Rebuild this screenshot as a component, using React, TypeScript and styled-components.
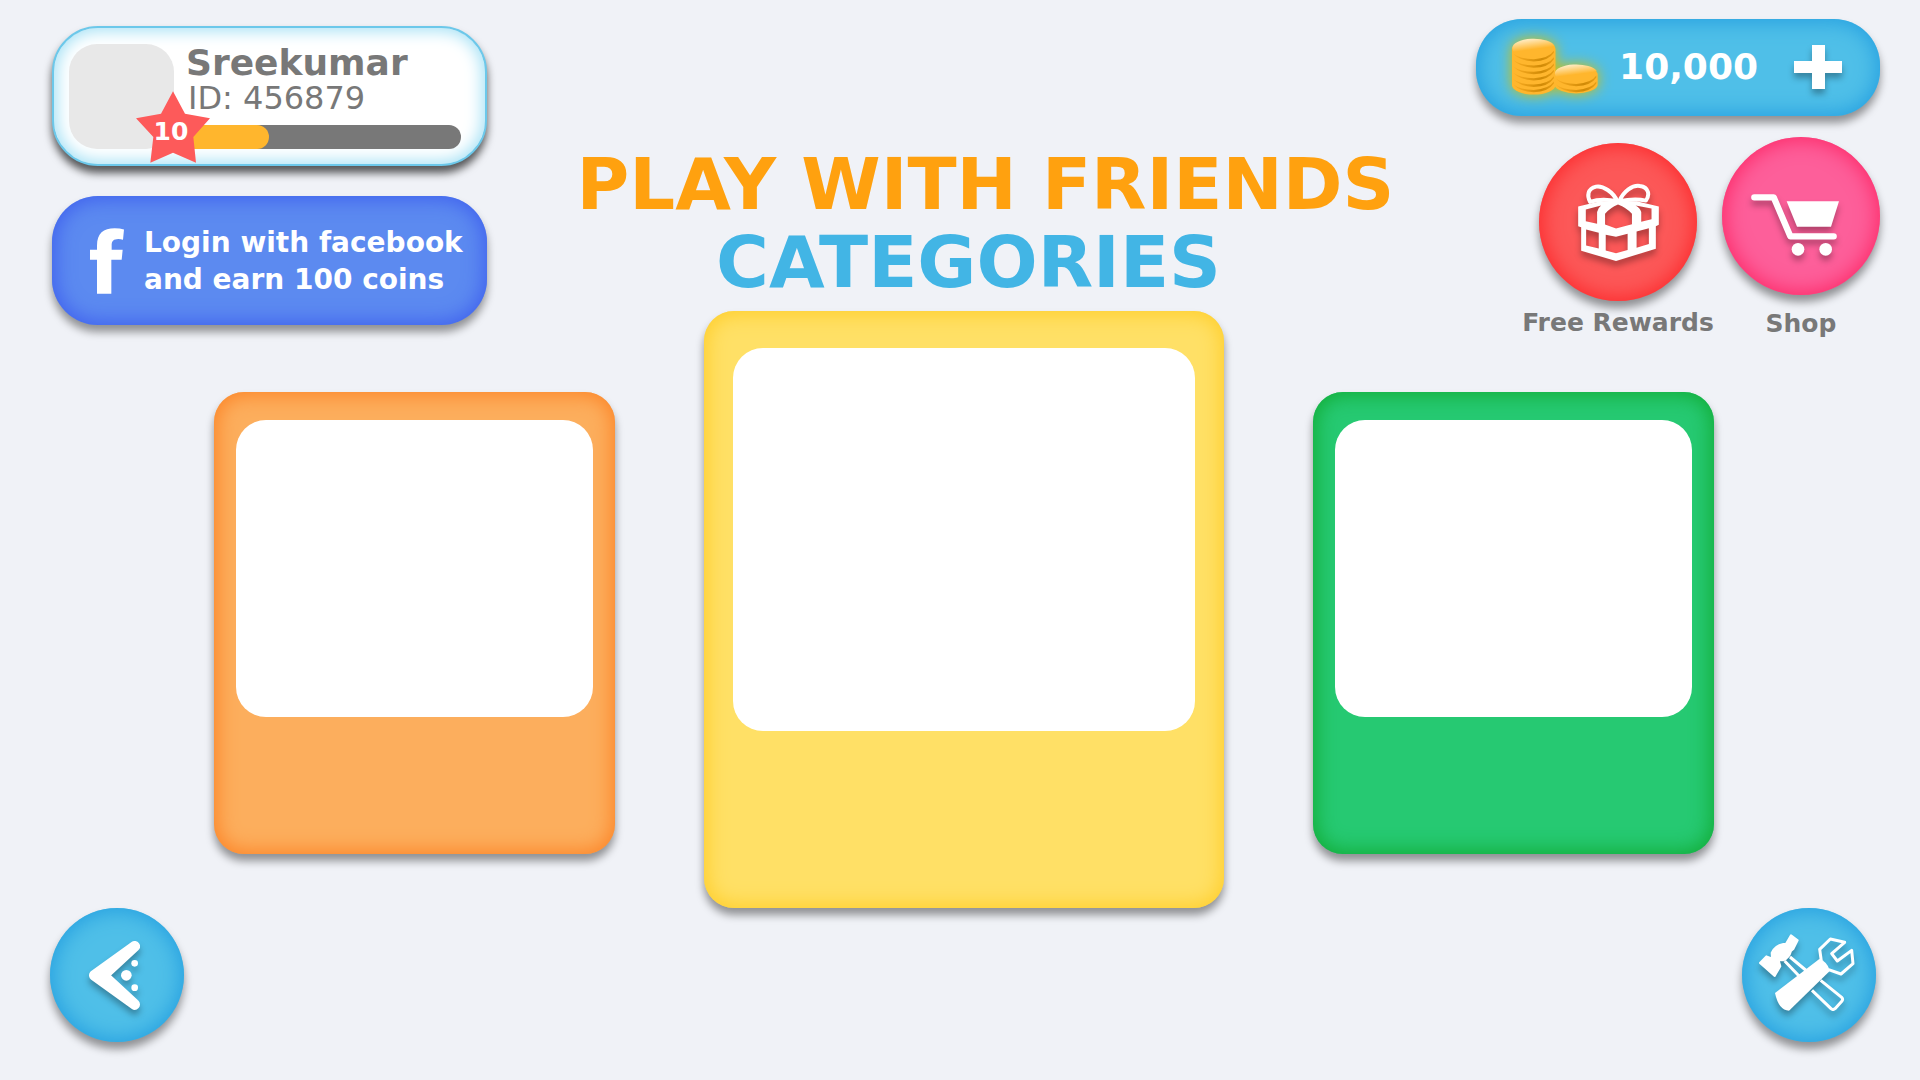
import React from "react";
import styled, { createGlobalStyle, css } from "styled-components";

const GlobalStyle = createGlobalStyle`
  *, *::before, *::after { box-sizing: border-box; }
  body {
    margin: 0;
    background: #f0f2f7;
    color: #787878;
    font-family: "DejaVu Sans", Verdana, sans-serif;
  }
  h1, p { margin: 0; }
  button {
    margin: 0;
    padding: 0;
    border: 0;
    background: none;
    color: inherit;
    font: inherit;
    cursor: pointer;
  }
  svg { display: block; flex: none; overflow: visible; }
`;

type Tone = { base: string; edge: string };

const tones: Record<string, Tone> = {
  sky: { base: "#4fbfe8", edge: "#26a0e0" },
  facebook: { base: "#5c8af0", edge: "#3f60ee" },
  red: { base: "#fc5858", edge: "#fc2a2c" },
  pink: { base: "#fd5f9a", edge: "#fd2a68" },
  orange: { base: "#fcae5d", edge: "#fc8427" },
  yellow: { base: "#ffe066", edge: "#ffce2b" },
  green: { base: "#26c972", edge: "#12ac36" },
};

const raised = css<{ $tone: Tone }>`
  background: ${(p) => p.$tone.base};
  box-shadow:
    inset 0 0 20px 3px ${(p) => p.$tone.edge},
    0 7px 9px rgba(0, 0, 0, 0.4);
`;

const iconShadow = css`
  filter: drop-shadow(0 5px 3px rgba(0, 0, 0, 0.3));
`;

const Page = styled.div`
  min-height: 100vh;
  display: flex;
  flex-direction: column;
  padding: 0 40px 38px 48px;
`;

const Header = styled.header`
  display: flex;
  justify-content: space-between;
  align-items: flex-start;
  height: 340px;
`;

const Account = styled.section`
  width: 435px;
  margin-left: 4px;
  padding-top: 26px;
  display: flex;
  flex-direction: column;
  gap: 30px;
`;

const Profile = styled.div`
  display: flex;
  height: 140px;
  padding: 16px 24px 15px 15px;
  border: 2px solid #6cc8ea;
  border-radius: 46px;
  background: #fff;
  box-shadow:
    inset 0 0 16px 3px #a5e1f5,
    0 7px 9px rgba(0, 0, 0, 0.65);
`;

const Avatar = styled.div`
  position: relative;
  flex: none;
  width: 105px;
  height: 105px;
  border-radius: 28px;
  background: #e8e8e8;
`;

const Level = styled.div`
  position: absolute;
  left: 67px;
  top: 47px;
  width: 74px;
  height: 72px;
  display: grid;
  place-items: center;
  color: #fff;
  font-size: 25px;
  line-height: 32px;
  font-weight: 700;

  > * { grid-area: 1 / 1; }
  > span { padding-top: 10px; padding-right: 4px; }
`;

const Info = styled.div`
  flex: 1;
  display: flex;
  flex-direction: column;
`;

const Name = styled.p`
  padding-left: 12px;
  font-size: 36px;
  line-height: 38px;
  font-weight: 700;
`;

const PlayerId = styled.p`
  flex: 1;
  padding-left: 14px;
  font-size: 32px;
  line-height: 32px;
`;

const Track = styled.div`
  height: 24px;
  border-radius: 0 12px 12px 0;
  background: #787878;
`;

const Fill = styled.div`
  width: 33%;
  height: 100%;
  border-radius: 0 12px 12px 0;
  background: #ffb62d;
`;

const FacebookLogin = styled.button<{ $tone: Tone }>`
  ${raised}
  display: flex;
  align-items: center;
  gap: 20px;
  height: 129px;
  padding-left: 38px;
  border-radius: 46px;
  color: #fff;
  font-size: 28px;
  line-height: 37px;
  font-weight: 700;
  text-align: left;
  white-space: nowrap;
`;

const Titles = styled.h1`
  padding-top: 145px;
  padding-left: 8px;
  font-size: 72px;
  line-height: 78px;
  font-weight: 700;
  text-align: center;
  white-space: nowrap;
  color: #ffa10f;
`;

const Subtitle = styled.span`
  display: block;
  padding-right: 34px;
  color: #42b5e5;
`;

const Wallet = styled.section`
  width: 404px;
  padding-top: 19px;
`;

const Balance = styled.div<{ $tone: Tone }>`
  ${raised}
  display: flex;
  align-items: center;
  justify-content: space-between;
  height: 97px;
  padding: 0 38px 2px 36px;
  border-radius: 46px;
  color: #fff;
  font-size: 36px;
  line-height: 48px;
  font-weight: 700;
`;

const Amount = styled.span`
  flex: 1;
  padding-right: 36px;
  text-align: right;
`;

const Coins = styled.svg`
  filter: drop-shadow(0 0 7px #d8c000);
`;

const IconButton = styled.button`
  > svg { ${iconShadow} }
`;

const Shortcuts = styled.div`
  display: flex;
  align-items: flex-start;
  justify-content: flex-end;
  padding-top: 21px;
`;

const Shortcut = styled.button<{ $lowered?: boolean; $width: number }>`
  width: ${(p) => p.$width}px;
  padding-top: ${(p) => (p.$lowered ? 6 : 0)}px;
  display: flex;
  flex-direction: column;
  align-items: center;
  gap: ${(p) => (p.$lowered ? 6 : 13)}px;
  font-size: 25px;
  line-height: 32px;
  font-weight: 700;
  white-space: nowrap;
`;

const Disc = styled.span<{ $tone: Tone; $size: number }>`
  ${raised}
  display: grid;
  place-items: center;
  width: ${(p) => p.$size}px;
  height: ${(p) => p.$size}px;
  border-radius: 50%;
  > svg { ${iconShadow} }
`;

const Categories = styled.main`
  display: flex;
  justify-content: center;
  align-items: flex-start;
  gap: 89px;
  margin-top: -29px;
`;

const Card = styled.button<{ $tone: Tone; $featured?: boolean }>`
  ${raised}
  display: flex;
  align-items: flex-start;
  width: ${(p) => (p.$featured ? 520 : 401)}px;
  height: ${(p) => (p.$featured ? 597 : 462)}px;
  margin-top: ${(p) => (p.$featured ? 0 : 81)}px;
  padding: ${(p) => (p.$featured ? "37px 29px" : "28px 22px")};
  border-radius: 30px;
`;

const Picture = styled.span<{ $featured?: boolean }>`
  flex: 1;
  height: ${(p) => (p.$featured ? 383 : 297)}px;
  border-radius: 30px;
  background: #fff;
`;

const Footer = styled.footer`
  display: flex;
  justify-content: space-between;
  margin-top: auto;
  padding: 0 4px 0 2px;
`;

const StarShape = () => (
  <svg width="74" height="72" viewBox="286 243 222 214" aria-hidden="true">
    <path fill="#fd5a5a" d="M397 243 433 310 508 324 458 380 466 457 397 427 329 457 338 380 286 324 361 310Z" />
  </svg>
);

const FacebookMark = () => (
  <svg width="34" height="66" viewBox="150 651 102 197" aria-hidden="true">
    <path
      fill="#fff"
      d="M171 848V746H150V716H171V703C171 666 190 651 224 651Q240 651 252 655L249 686Q240 683 230 684C218 685 215 692 215 703V716H248L245 746H214V848Z"
    />
  </svg>
);

const CoinStacks = () => {
  const bands = (cx: number, ys: number[]) =>
    ys.map((y) => (
      <path
        key={`${cx}-${y}`}
        d={`M${cx - 62} ${y + 10}Q${cx - 40} ${y + 27} ${cx} ${y + 27}Q${cx + 46} ${y + 24} ${cx + 60} ${y + 2}V${y + 8}Q${cx + 44} ${y + 33} ${cx} ${y + 34}Q${cx - 42} ${y + 32} ${cx - 62} ${y + 10}Z`}
        fill="url(#coinBand)"
      />
    ));
  return (
    <Coins width="86" height="56" viewBox="158 86 257 167" aria-hidden="true">
      <defs>
        <linearGradient id="coinBand" x1="0" x2="1">
          <stop offset="0" stopColor="#fbae24" />
          <stop offset="0.7" stopColor="#d08a06" />
          <stop offset="1" stopColor="#e79d14" />
        </linearGradient>
        <linearGradient id="coinShine" x1="0.2" y1="0" x2="0.5" y2="0.75">
          <stop offset="0" stopColor="#fff3d8" />
          <stop offset="1" stopColor="#ffb62d" />
        </linearGradient>
      </defs>
      <path fill="#ffb62d" d="M158 116A65 29 0 0 1 288 116V224A65 28 0 0 1 158 224Z" />
      {bands(223, [119, 138, 157, 176, 195, 211])}
      <path fill="url(#coinShine)" d="M159 114A64 28 0 0 1 286 108C250 112 220 132 166 126Q159 120 159 114Z" />
      <path fill="#ffb62d" d="M285 190A65 28 0 0 1 414 190V224A65 28 0 0 1 285 224Z" />
      {bands(350, [193, 211])}
      <path fill="url(#coinShine)" d="M286 189A64 27 0 0 1 412 182C376 186 346 206 293 201Q286 195 286 189Z" />
    </Coins>
  );
};

const PlusIcon = () => (
  <svg width="48" height="44" viewBox="0 0 48 44" aria-hidden="true">
    <path fill="#fff" d="M18 0H31V16H48V28H31V44H18V28H0V16H18Z" />
  </svg>
);

const GiftIcon = () => (
  <svg width="81" height="77" viewBox="234 178 243 232" aria-hidden="true">
    <path
      fill="#fff"
      fillRule="evenodd"
      d="M234 246 300 230 410 230 477 246V301L468 305V373L348 410 243 379V308L234 305Z
         M257 255V290L291 298V262Q294 250 303 243Z
         M315 268V300L348 312 396 299V268Q380 250 354 240 330 250 315 268Z
         M407 243Q420 250 424 262V292L455 284V252Z
         M258 315V363L296 372V325Z
         M317 331V378L348 387 383 377V328L348 337Z
         M410 321V370L447 359V311Z"
    />
    <g fill="none" stroke="#fff" strokeWidth="12" strokeLinejoin="round">
      <path d="M352 230C340 202 308 182 288 186C262 192 260 214 270 232Q304 220 352 230Z" />
      <path d="M358 230C370 200 398 180 420 184C448 188 450 212 438 228Q404 220 358 230Z" />
    </g>
  </svg>
);

const CartIcon = () => (
  <svg width="100" height="80" viewBox="750 152 300 240" aria-hidden="true">
    <path fill="none" stroke="#fff" strokeWidth="19" strokeLinecap="round" strokeLinejoin="round" d="M760 216H818L868 333H998" />
    <path fill="#fff" d="M857 228H1014L990 304H888Z" />
    <circle cx="891" cy="372" r="19" fill="#fff" />
    <circle cx="974" cy="372" r="19" fill="#fff" />
  </svg>
);

const BackIcon = () => (
  <svg width="57" height="69" viewBox="177 151 171 207" aria-hidden="true">
    <path fill="#fff" stroke="#fff" strokeWidth="32" strokeLinejoin="round" d="M193 254 314 167 220 254 314 341Z" />
    <circle cx="289" cy="254" r="16" fill="#fff" />
    <circle cx="314" cy="218" r="10" fill="#fff" />
    <circle cx="314" cy="291" r="10" fill="#fff" />
  </svg>
);

const ToolsIcon = () => (
  <svg width="100" height="83" viewBox="117 133 300 249" aria-hidden="true">
    <path
      fill="#fff"
      stroke="#fff"
      strokeWidth="6"
      strokeLinejoin="round"
      d="M120 220 139 200 156 206 155 190Q164 168 190 163L198 162 213 137 233 152 220 178 213 184Q208 204 190 212L176 212 181 230 164 259Z"
    />
    <path
      fill="none"
      stroke="#fff"
      strokeWidth="9"
      strokeLinejoin="round"
      d="M194 214 240 262M210 202 264 247M276 302 333 357Q339 362 345 357L366 334Q370 328 365 323L302 272"
    />
    <path fill="#fff" d="M298 208Q320 214 330 243L207 363Q176 362 165 310Z" />
    <path fill="none" stroke="#fff" strokeWidth="9" strokeLinejoin="round" d="M304 214 299 179 331 148 374 158 335 192 352 214 395 182 399 222 363 253 326 240" />
  </svg>
);

export default function App() {
  return (
    <>
      <GlobalStyle />
      <Page>
        <Header>
          <Account>
            <Profile>
              <Avatar>
                <Level>
                  <StarShape />
                  <span>10</span>
                </Level>
              </Avatar>
              <Info>
                <Name>Sreekumar</Name>
                <PlayerId>ID: 456879</PlayerId>
                <Track role="progressbar" aria-label="Level progress" aria-valuenow={33} aria-valuemin={0} aria-valuemax={100}>
                  <Fill />
                </Track>
              </Info>
            </Profile>
            <FacebookLogin $tone={tones.facebook}>
              <FacebookMark />
              <span>
                Login with facebook
                <br />
                and earn 100 coins
              </span>
            </FacebookLogin>
          </Account>

          <Titles>
            PLAY WITH FRIENDS
            <Subtitle>CATEGORIES</Subtitle>
          </Titles>

          <Wallet>
            <Balance $tone={tones.sky}>
              <CoinStacks />
              <Amount>10,000</Amount>
              <IconButton aria-label="Add coins">
                <PlusIcon />
              </IconButton>
            </Balance>
            <Shortcuts>
              <Shortcut $lowered $width={208}>
                <Disc $tone={tones.red} $size={158}>
                  <GiftIcon />
                </Disc>
                Free Rewards
              </Shortcut>
              <Shortcut $width={158}>
                <Disc $tone={tones.pink} $size={158}>
                  <CartIcon />
                </Disc>
                Shop
              </Shortcut>
            </Shortcuts>
          </Wallet>
        </Header>

        <Categories>
          <Card $tone={tones.orange} aria-label="First category">
            <Picture />
          </Card>
          <Card $tone={tones.yellow} $featured aria-label="Second category">
            <Picture $featured />
          </Card>
          <Card $tone={tones.green} aria-label="Third category">
            <Picture />
          </Card>
        </Categories>

        <Footer>
          <IconButton aria-label="Back">
            <Disc $tone={tones.sky} $size={134}>
              <BackIcon />
            </Disc>
          </IconButton>
          <IconButton aria-label="Settings">
            <Disc $tone={tones.sky} $size={134}>
              <ToolsIcon />
            </Disc>
          </IconButton>
        </Footer>
      </Page>
    </>
  );
}
